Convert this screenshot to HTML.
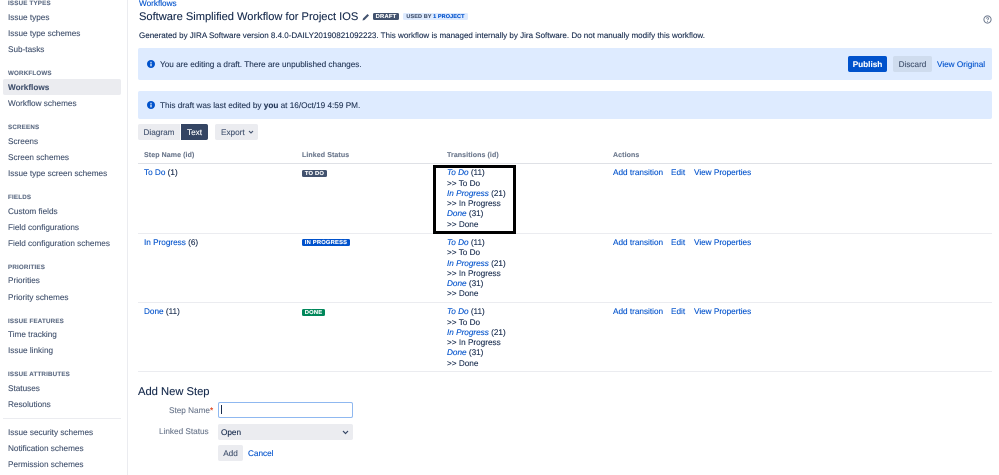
<!DOCTYPE html>
<html><head><meta charset="utf-8"><style>
html,body{margin:0;padding:0;background:#fff}
body{width:999px;height:475px;overflow:hidden;position:relative;font-family:"Liberation Sans",sans-serif;font-size:8.2px;color:#172b4d;text-rendering:geometricPrecision;filter:blur(.25px);-webkit-text-stroke:.12px}
.t{position:absolute;white-space:nowrap;line-height:12px;margin-top:1px}
.b{position:absolute}
.n{color:#42526e;font-size:8.2px}
.t.h{color:#5e6c84;font-size:6.2px;font-weight:bold;letter-spacing:.2px;margin-top:0}
.l{color:#0052cc}
i.l{font-style:italic}
.th{color:#6b778c;font-size:7px;font-weight:bold;letter-spacing:.1px}
.lz{position:absolute;border-radius:1.5px;font-size:5.8px;font-weight:bold;line-height:8px;height:7px;overflow:hidden;text-align:center;color:#fff;letter-spacing:.2px}
.btn{line-height:17px !important}
</style></head><body>
<div class="b" style="left:127px;top:0;width:1px;height:475px;background:#ebecf0"></div>
<div class="b" style="left:3px;top:79px;width:118px;height:16px;background:#ebecf0;border-radius:2px"></div>
<div class="b" style="left:3px;top:418px;width:118px;height:1px;background:#ebecf0"></div>

<div class="t h" style="left:8px;top:-2px">ISSUE TYPES</div>
<div class="t n" style="left:8px;top:11px">Issue types</div>
<div class="t n" style="left:8px;top:27px">Issue type schemes</div>
<div class="t n" style="left:8px;top:43px">Sub-tasks</div>
<div class="t h" style="left:8px;top:68px">WORKFLOWS</div>
<div class="t n" style="left:8px;top:81px;font-weight:bold">Workflows</div>
<div class="t n" style="left:8px;top:97px">Workflow schemes</div>
<div class="t h" style="left:8px;top:122px">SCREENS</div>
<div class="t n" style="left:8px;top:135px">Screens</div>
<div class="t n" style="left:8px;top:151px">Screen schemes</div>
<div class="t n" style="left:8px;top:167px">Issue type screen schemes</div>
<div class="t h" style="left:8px;top:192px">FIELDS</div>
<div class="t n" style="left:8px;top:205px">Custom fields</div>
<div class="t n" style="left:8px;top:221px">Field configurations</div>
<div class="t n" style="left:8px;top:237px">Field configuration schemes</div>
<div class="t h" style="left:8px;top:262px">PRIORITIES</div>
<div class="t n" style="left:8px;top:274px">Priorities</div>
<div class="t n" style="left:8px;top:291px">Priority schemes</div>
<div class="t h" style="left:8px;top:316px">ISSUE FEATURES</div>
<div class="t n" style="left:8px;top:328px">Time tracking</div>
<div class="t n" style="left:8px;top:344px">Issue linking</div>
<div class="t h" style="left:8px;top:369px">ISSUE ATTRIBUTES</div>
<div class="t n" style="left:8px;top:382px">Statuses</div>
<div class="t n" style="left:8px;top:398px">Resolutions</div>
<div class="t n" style="left:8px;top:426px">Issue security schemes</div>
<div class="t n" style="left:8px;top:442px">Notification schemes</div>
<div class="t n" style="left:8px;top:458px">Permission schemes</div>

<div class="t l" style="left:139px;top:-3px">Workflows</div>
<div class="t" style="left:139px;top:9px;font-size:11.1px;line-height:14px">Software Simplified Workflow for Project IOS</div>
<svg class="b" style="left:362px;top:13px" width="8" height="8" viewBox="0 0 8 8"><path d="M0.5 7.5L1 5.5L5.5 1L7 2.5L2.5 7Z" fill="#42526e"/></svg>
<div class="lz" style="left:373px;top:13px;width:26px;background:#42526e">DRAFT</div>
<div class="lz" style="left:403px;top:13px;width:65px;background:#deebff;color:#42526e;font-size:5.5px;letter-spacing:.1px">USED BY <span style="color:#0052cc">1 PROJECT</span></div>
<svg class="b" style="left:983px;top:15px" width="9" height="9" viewBox="0 0 9 9"><circle cx="4.5" cy="4.5" r="3.6" fill="none" stroke="#6b778c" stroke-width="1"/><path d="M3.4 3.6C3.5 2.4 5.6 2.4 5.6 3.6C5.6 4.4 4.5 4.4 4.5 5.3" fill="none" stroke="#6b778c" stroke-width=".8"/><circle cx="4.5" cy="6.4" r=".5" fill="#6b778c"/></svg>
<div class="t" style="left:139px;top:29px;font-size:8.03px">Generated by JIRA Software version 8.4.0-DAILY20190821092223. This workflow is managed internally by Jira Software. Do not manually modify this workflow.</div>

<div class="b" style="left:138px;top:48px;width:854px;height:32px;background:#deebff;border-radius:2px"></div>
<svg class="b" style="left:147px;top:60px" width="8" height="8" viewBox="0 0 8 8"><circle cx="4" cy="4" r="4" fill="#0052cc"/><rect x="3.4" y="3.5" width="1.2" height="2.8" fill="#fff"/><rect x="3.4" y="1.8" width="1.2" height="1.1" fill="#fff"/></svg>
<div class="t" style="left:160px;top:58px;font-size:8.2px;color:#253858">You are editing a draft. There are unpublished changes.</div>
<div class="b btn" style="left:848px;top:56px;width:39px;height:16px;background:#0052cc;border-radius:2px;color:#fff;font-weight:bold;font-size:8.2px;text-align:center">Publish</div>
<div class="b btn" style="left:893px;top:56px;width:39px;height:16px;background:#cfdcee;border-radius:2px;color:#42526e;font-size:8.2px;text-align:center">Discard</div>
<div class="t l" style="left:937px;top:58px;font-size:8.2px">View Original</div>

<div class="b" style="left:138px;top:91px;width:854px;height:28px;background:#deebff;border-radius:2px"></div>
<svg class="b" style="left:147px;top:101px" width="8" height="8" viewBox="0 0 8 8"><circle cx="4" cy="4" r="4" fill="#0052cc"/><rect x="3.4" y="3.5" width="1.2" height="2.8" fill="#fff"/><rect x="3.4" y="1.8" width="1.2" height="1.1" fill="#fff"/></svg>
<div class="t" style="left:160px;top:99px;font-size:8.2px;color:#253858">This draft was last edited by <b>you</b> at 16/Oct/19 4:59 PM.</div>

<div class="b btn" style="left:138px;top:124px;width:42px;height:16px;background:#ebecf0;border-radius:2px 0 0 2px;color:#42526e;font-size:8.2px;text-align:center">Diagram</div>
<div class="b btn" style="left:181px;top:124px;width:27px;height:16px;background:#344563;border-radius:0 2px 2px 0;color:#fff;font-size:8.2px;text-align:center">Text</div>
<div class="b" style="left:215px;top:124px;width:43px;height:16px;background:#ebecf0;border-radius:2px"></div>
<div class="t" style="left:221px;top:126px;color:#42526e;font-size:8.2px">Export</div>
<svg class="b" style="left:248px;top:130px" width="6" height="4" viewBox="0 0 6 4"><path d="M1 1L3 3L5 1" fill="none" stroke="#42526e" stroke-width="1.1"/></svg>

<div class="t th" style="left:144px;top:149px">Step Name (id)</div>
<div class="t th" style="left:302px;top:149px">Linked Status</div>
<div class="t th" style="left:447px;top:149px">Transitions (id)</div>
<div class="t th" style="left:613px;top:149px">Actions</div>
<div class="b" style="left:138px;top:163px;width:854px;height:1px;background:#dfe1e6"></div>
<div class="b" style="left:138px;top:233px;width:854px;height:1px;background:#ebecf0"></div>
<div class="b" style="left:138px;top:302px;width:854px;height:1px;background:#ebecf0"></div>
<div class="b" style="left:138px;top:371px;width:854px;height:1px;background:#ebecf0"></div>

<div class="t" style="left:144px;top:166px"><span class="l">To Do</span> (1)</div>
<div class="lz" style="left:302px;top:170px;width:25px;background:#42526e">TO DO</div>
<div class="t l" style="left:613px;top:166px">Add transition</div>
<div class="t l" style="left:671px;top:166px">Edit</div>
<div class="t l" style="left:694px;top:166px">View Properties</div>

<div class="t" style="left:447px;top:166px"><i class="l">To Do</i> (11)</div>
<div class="t" style="left:447px;top:177px">&gt;&gt; To Do</div>
<div class="t" style="left:447px;top:187px"><i class="l">In Progress</i> (21)</div>
<div class="t" style="left:447px;top:197px">&gt;&gt; In Progress</div>
<div class="t" style="left:447px;top:207px"><i class="l">Done</i> (31)</div>
<div class="t" style="left:447px;top:218px">&gt;&gt; Done</div>
<div class="b" style="left:433px;top:165px;width:77px;height:63px;border:3px solid #000"></div>

<div class="t" style="left:144px;top:236px"><span class="l">In Progress</span> (6)</div>
<div class="lz" style="left:302px;top:239px;width:48px;background:#0052cc">IN PROGRESS</div>
<div class="t l" style="left:613px;top:236px">Add transition</div>
<div class="t l" style="left:671px;top:236px">Edit</div>
<div class="t l" style="left:694px;top:236px">View Properties</div>
<div class="t" style="left:447px;top:236px"><i class="l">To Do</i> (11)</div>
<div class="t" style="left:447px;top:246px">&gt;&gt; To Do</div>
<div class="t" style="left:447px;top:257px"><i class="l">In Progress</i> (21)</div>
<div class="t" style="left:447px;top:267px">&gt;&gt; In Progress</div>
<div class="t" style="left:447px;top:277px"><i class="l">Done</i> (31)</div>
<div class="t" style="left:447px;top:287px">&gt;&gt; Done</div>

<div class="t" style="left:144px;top:305px"><span class="l">Done</span> (11)</div>
<div class="lz" style="left:302px;top:309px;width:23px;background:#00875a">DONE</div>
<div class="t l" style="left:613px;top:305px">Add transition</div>
<div class="t l" style="left:671px;top:305px">Edit</div>
<div class="t l" style="left:694px;top:305px">View Properties</div>
<div class="t" style="left:447px;top:305px"><i class="l">To Do</i> (11)</div>
<div class="t" style="left:447px;top:316px">&gt;&gt; To Do</div>
<div class="t" style="left:447px;top:326px"><i class="l">In Progress</i> (21)</div>
<div class="t" style="left:447px;top:336px">&gt;&gt; In Progress</div>
<div class="t" style="left:447px;top:346px"><i class="l">Done</i> (31)</div>
<div class="t" style="left:447px;top:357px">&gt;&gt; Done</div>

<div class="t" style="left:138px;top:384px;font-size:11.2px;line-height:14px">Add New Step</div>
<div class="t" style="left:169px;top:404px;color:#6b778c;font-size:8.2px">Step Name<span style="color:#de350b">*</span></div>
<div class="b" style="left:218px;top:402px;width:133px;height:14px;background:#fff;border:1px solid #8fb8f0;border-radius:2px"></div>
<div class="b" style="left:221px;top:405px;width:1px;height:9px;background:#172b4d"></div>
<div class="t" style="left:159px;top:425px;color:#6b778c;font-size:8.2px">Linked Status</div>
<div class="b" style="left:218px;top:424px;width:135px;height:16px;background:#ebecf0;border-radius:2px"></div>
<div class="t" style="left:221px;top:426px;font-size:8.2px">Open</div>
<svg class="b" style="left:342px;top:430px" width="7" height="5" viewBox="0 0 7 5"><path d="M1 1L3.5 3.5L6 1" fill="none" stroke="#344563" stroke-width="1.2"/></svg>
<div class="b btn" style="left:218px;top:445px;width:25px;height:16px;background:#ebecf0;border-radius:2px;color:#42526e;font-size:8.2px;text-align:center">Add</div>
<div class="t l" style="left:248px;top:447px;font-size:8.2px">Cancel</div>
</body></html>
